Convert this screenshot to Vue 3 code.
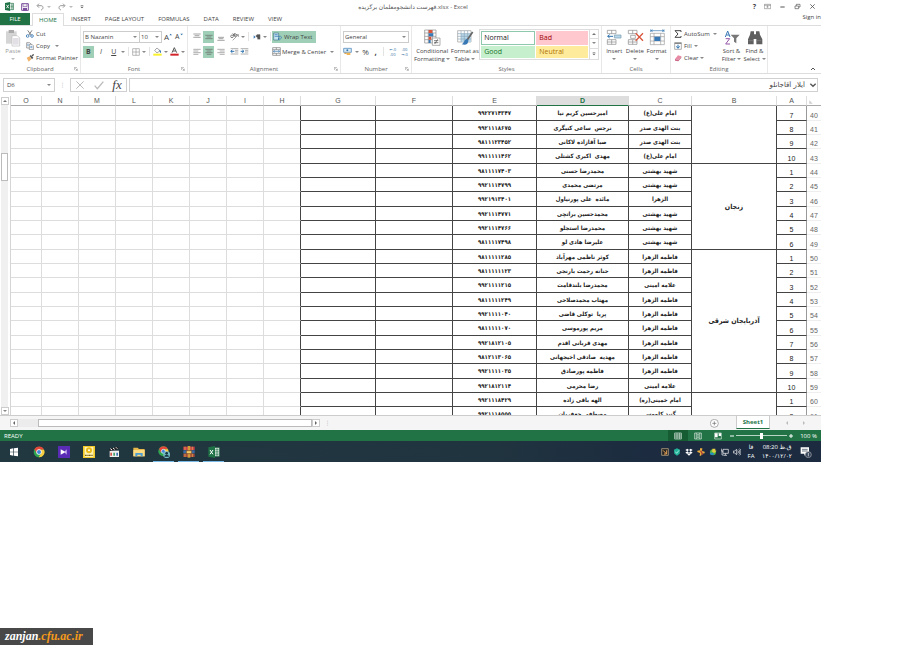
<script setup>
import { ref } from 'vue'

const tabs = ['INSERT', 'PAGE LAYOUT', 'FORMULAS', 'DATA', 'REVIEW', 'VIEW']
const columns = ['O', 'N', 'M', 'L', 'K', 'J', 'I', 'H', 'G', 'F', 'E', 'D', 'C', 'B', 'A']
const emptyColumns = ['O', 'N', 'M', 'L', 'K', 'J', 'I', 'H']

const records = [
  ['۹۹۲۲۷۱۴۳۴۷', 'امیرحسین کریم نیا', 'امام علی(ع)', 7],
  ['۹۹۲۱۱۱۸۶۷۵', 'نرجس  ساعی کنیگری', 'بنت الهدی صدر', 8],
  ['۹۸۱۱۱۲۳۴۵۲', 'صبا آقازاده لاکانی', 'بنت الهدی صدر', 9],
  ['۹۹۱۱۱۱۱۴۶۲', 'مهدی  اکبری کشتلی', 'امام علی(ع)', 10],
  ['۹۸۱۱۱۱۷۴۰۳', 'محمدرضا حسنی', 'شهید بهشتی', 1],
  ['۹۹۲۱۱۱۴۷۹۹', 'مرتضی محمدی', 'شهید بهشتی', 2],
  ['۹۹۲۱۹۱۳۴۰۱', 'مائده  علی پورنیاول', 'الزهرا', 3],
  ['۹۹۲۱۱۱۴۷۷۱', 'محمدحسین براتچی', 'شهید بهشتی', 4],
  ['۹۹۲۱۱۱۴۷۶۶', 'محمدرضا استجلو', 'شهید بهشتی', 5],
  ['۹۸۱۱۱۱۷۴۹۸', 'علیرضا هادی لو', 'شهید بهشتی', 6],
  ['۹۸۱۱۱۱۱۲۸۵', 'کوثر ناظمی مهرآباد', 'فاطمه الزهرا', 1],
  ['۹۸۱۱۱۱۱۱۲۳', 'حنانه رحمت بارنجی', 'فاطمه الزهرا', 2],
  ['۹۹۲۱۱۱۱۲۱۵', 'محمدرضا بلندقامت', 'علامه امینی', 3],
  ['۹۸۱۱۱۱۱۲۴۹', 'مهتاب محمدصلاحی', 'فاطمه الزهرا', 4],
  ['۹۹۲۱۱۱۱۰۴۰', 'پریا  توکلی قاضی', 'فاطمه الزهرا', 5],
  ['۹۸۱۱۱۱۱۰۷۰', 'مریم پورموسی', 'فاطمه الزهرا', 6],
  ['۹۹۲۱۸۱۲۱۰۵', 'مهدی قربانی اقدم', 'فاطمه الزهرا', 7],
  ['۹۸۱۲۱۱۳۰۶۵', 'مهدیه  صادقی اخیجهانی', 'فاطمه الزهرا', 8],
  ['۹۹۲۱۱۱۱۰۳۵', 'فاطمه پورصادق', 'فاطمه الزهرا', 9],
  ['۹۹۲۱۸۱۲۱۱۴', 'رضا محرمی', 'علامه امینی', 10],
  ['۹۹۲۱۱۱۸۴۲۹', 'الهه باقی زاده', 'امام خمینی(ره)', 1],
  ['۹۹۲۱۱۱۸۵۵۵', 'مصطفی جعفریان', 'گنبد کاووس', 2],
]
const provinces = {
  0: { name: '', span: 4 },
  4: { name: 'زنجان', span: 6 },
  10: { name: 'آذربایجان شرقی', span: 10 },
  20: { name: '', span: 2 },
}
const rows = records.map(([id, name, campus, index], i) => ({
  id, name, campus, index, number: 40 + i, province: provinces[i],
}))

const cellName = ref('D6')
const formula = ref('آیلار آقاجانلو')
const zoomLevel = ref(50)
</script>

<template>
  <div class="page">
    <main class="excel">
      <header class="titlebar">
        <div class="quick">
          <svg class="app-icon" viewBox="0 0 26 26"><path d="M0 3 15 0v26L0 23z" fill="#1e7145" /><path d="M15 4h10v18H15" fill="#fff" stroke="#1e7145" stroke-width="2" /><path d="M16 9h8M16 13h8M16 17h8M20 5v16" stroke="#1e7145" stroke-width="1.5" /><path d="m4 8 7 10M11 8 4 18" stroke="#fff" stroke-width="2.5" /></svg>
          <button aria-label="Save"><svg class="i8" viewBox="0 0 24 24"><path d="M2 2h20v20H2z" fill="#fff" stroke="#7b4f9d" stroke-width="3" /><path d="M6 2h12v9H6z" fill="#eee" stroke="#7b4f9d" stroke-width="2" /><path d="M6 15h12v8H6z" fill="#7b4f9d" /></svg></button>
          <button aria-label="Undo"><svg class="i8" viewBox="0 0 24 24"><path d="M9 2 3 8l6 6M4 8h11c8 0 8 11 0 13" fill="none" stroke="#999" stroke-width="3" /></svg><i class="caret pale"></i></button>
          <button aria-label="Redo"><svg class="i8" viewBox="0 0 24 24"><path d="m15 2 6 6-6 6M20 8H9C1 8 1 19 9 21" fill="none" stroke="#999" stroke-width="3" /></svg><i class="caret pale"></i></button>
          <button aria-label="Customize toolbar"><svg class="i4" viewBox="0 0 12 12"><path d="M2 1h8" stroke="#555" stroke-width="2" /><path d="M1 5h10L6 10z" fill="#555" /></svg></button>
        </div>
        <h1>فهرست دانشجومعلمان برگزیده.xlsx - Excel</h1>
        <div class="window">
          <button aria-label="Help" class="help">?</button>
          <button aria-label="Ribbon options"><svg class="i7" viewBox="0 0 21 21"><path d="M1 4h19v13H1zM1 7h19M10.500 15V9M7 12l3.500-3 3.500 3" fill="none" stroke="#666" stroke-width="1.500" /></svg></button>
          <button aria-label="Minimize"><svg class="i7" viewBox="0 0 21 21"><path d="M4 12h13" stroke="#555" stroke-width="3" /></svg></button>
          <button aria-label="Restore"><svg class="i7" viewBox="0 0 21 21"><path d="M3 9h11v8H3zM7 9V4h11v8h-4" fill="none" stroke="#555" stroke-width="2" /></svg></button>
          <button aria-label="Close"><svg class="i7" viewBox="0 0 21 21"><path d="m4 4 13 13M17 4 4 17" stroke="#555" stroke-width="2.500" /></svg></button>
        </div>
      </header>

      <nav class="tabs">
        <button class="file">FILE</button>
        <button class="home">HOME</button>
        <button v-for="tab in tabs" :key="tab">{{ tab }}</button>
        <a href="#signin">Sign in</a>
      </nav>

      <section class="ribbon">
        <div class="group clipboard">
          <div class="tools">
            <button class="big paste">
              <svg class="i18" viewBox="0 0 48 54"><path d="M3 7h32v37H3z" fill="#d5d5d5" /><path d="M11 3h16v9H11z" fill="#aaa" /><path d="M21 20h16l7 7v24H21z" fill="#fff" stroke="#bbb" stroke-width="2" /><path d="M24 27h17v20H24z" fill="#e2dfe5" /></svg>
              <span>Paste</span><i class="caret pale"></i>
            </button>
            <div class="stack">
              <button><svg class="i8" viewBox="0 0 24 24"><path d="m5 1 11 15M18 1 8 16" stroke="#666" stroke-width="2.500" /><circle cx="5" cy="18" r="4" fill="none" stroke="#3878b4" stroke-width="2.500" /><circle cx="18" cy="18" r="4" fill="none" stroke="#3878b4" stroke-width="2.500" /></svg>Cut</button>
              <button><svg class="i8" viewBox="0 0 24 24"><path d="M2 2h9l4 4v12H2z" fill="#fff" stroke="#777" stroke-width="2" /><path d="M10 7h8l4 4v12H10z" fill="#fff" stroke="#777" stroke-width="2" /><path d="M13 13h6M13 17h6M4 7h4M4 11h4" stroke="#3878b4" stroke-width="2" /></svg>Copy <i class="caret"></i></button>
              <button><svg class="i8" viewBox="0 0 24 24"><path d="m2 11 9-4 5 9-8 7z" fill="#f0b267" /><path d="m11 6 3-3 8 8-4 5z" fill="#555" /><path d="m18 6 5-5" stroke="#555" stroke-width="4" /></svg>Format Painter</button>
            </div>
          </div>
          <footer>Clipboard<svg class="launch" viewBox="0 0 12 12"><path d="M1 9V1h8M4 4l6 6M10 5v5H5" fill="none" stroke="#777" stroke-width="1.500" /></svg></footer>
        </div>

        <div class="group font">
          <div class="tools rows">
            <div class="line">
              <label class="combo family"><select aria-label="Font"><option>B Nazanin</option></select><i class="caret"></i></label>
              <label class="combo size"><select aria-label="Font size"><option>10</option></select><i class="caret"></i></label>
              <button class="letter" aria-label="Grow font">A<svg class="i4" viewBox="0 0 12 12"><path d="m1 7 4-5 4 5" fill="#2b70ad" /></svg></button>
              <button class="letter small" aria-label="Shrink font">A<svg class="i4" viewBox="0 0 12 12"><path d="m1 2 4 5 4-5" fill="#2b70ad" /></svg></button>
            </div>
            <div class="line">
              <button class="cell on"><b>B</b></button>
              <button class="cell"><em>I</em></button>
              <button class="cell"><u>U</u></button><i class="caret"></i>
              <hr>
              <button aria-label="Borders"><svg class="i8" viewBox="0 0 24 24"><path d="M2 2h20v20H2zM12 2v20M2 12h20" fill="none" stroke="#999" stroke-width="2" /></svg></button><i class="caret"></i>
              <hr>
              <button aria-label="Fill color"><svg class="i9" viewBox="0 0 27 27"><path d="m12 3 9 8-9 7-7-8z" fill="#fff" stroke="#777" stroke-width="2" /><path d="M20 8c5 2 5 8 3 10-3-2-4-5-3-10" fill="#3878b4" /><path d="M1 20h25v6H1z" fill="#fbf12c" /></svg></button><i class="caret"></i>
              <button aria-label="Font color"><svg class="i9" viewBox="0 0 27 27"><path d="m6 17 7-15 7 15M9 12h8" fill="none" stroke="#555" stroke-width="3" /><path d="M1 20h25v6H1z" fill="#d2232a" /></svg></button><i class="caret"></i>
            </div>
          </div>
          <footer>Font<svg class="launch" viewBox="0 0 12 12"><path d="M1 9V1h8M4 4l6 6M10 5v5H5" fill="none" stroke="#777" stroke-width="1.500" /></svg></footer>
        </div>

        <div class="group alignment">
          <div class="tools rows">
            <div class="line">
              <button class="cell" aria-label="Top align"><svg class="i8" viewBox="0 0 24 24"><path d="M1 3h22M5 8h14M1 13h22" stroke="#777" stroke-width="2" /></svg></button>
              <button class="cell on" aria-label="Middle align"><svg class="i8" viewBox="0 0 24 24"><path d="M1 7h22M5 12h14M1 17h22" stroke="#666" stroke-width="2" /></svg></button>
              <button class="cell" aria-label="Bottom align"><svg class="i8" viewBox="0 0 24 24"><path d="M3 13h18M5 17h14M1 22h22" stroke="#777" stroke-width="2" /></svg></button>
              <button class="orient" aria-label="Orientation"><svg class="i9" viewBox="0 0 27 27"><path d="M8 25 25 8M18 8h7v7" fill="none" stroke="#777" stroke-width="2" /><circle cx="6" cy="13" r="4" fill="none" stroke="#555" stroke-width="2" /><path d="m8 4 8 9M9 10l6-5" stroke="#555" stroke-width="2" /><circle cx="15" cy="9" r="4" fill="none" stroke="#555" stroke-width="2" /></svg><i class="caret"></i></button>
              <hr>
              <button class="orient" aria-label="Text direction"><svg class="i8" viewBox="0 0 24 24"><path d="m2 7 6 5-6 5z" fill="#3878b4" /><path d="M14 19V5h7v14M18 5v14M14 5c-6 0-6 8 0 8" fill="#555" stroke="#555" stroke-width="1.500" /></svg><i class="caret"></i></button>
              <hr>
              <button class="wrap on"><svg class="i9" viewBox="0 0 27 27"><path d="M2 3h15v21H2z" fill="#c6e5f3" stroke="#478" stroke-width="2" /><path d="M5 8h9M5 13h17c5 0 5 8-2 8h-4M19 17l-4 4 4 4" fill="none" stroke="#2b70ad" stroke-width="2" /></svg>Wrap Text</button>
            </div>
            <div class="line">
              <button class="cell" aria-label="Align left"><svg class="i8" viewBox="0 0 24 24"><path d="M1 4h22M1 9h15M1 14h22M1 19h15" stroke="#888" stroke-width="2" /></svg></button>
              <button class="cell on" aria-label="Center"><svg class="i8" viewBox="0 0 24 24"><path d="M1 4h22M5 9h14M1 14h22M5 19h14" stroke="#666" stroke-width="2" /></svg></button>
              <button class="cell" aria-label="Align right"><svg class="i8" viewBox="0 0 24 24"><path d="M1 4h22M8 9h15M1 14h22M8 19h15" stroke="#888" stroke-width="2" /></svg></button>
              <button class="indent" aria-label="Decrease indent"><svg class="i9" viewBox="0 0 27 27"><path d="M2 5h23M15 10h10M15 15h10M2 21h23" stroke="#888" stroke-width="2" /><path d="M13 13H3m4-4-5 4 5 4" fill="none" stroke="#2b70ad" stroke-width="3" /></svg></button>
              <button aria-label="Increase indent"><svg class="i9" viewBox="0 0 27 27"><path d="M2 5h23M15 10h10M15 15h10M2 21h23" stroke="#888" stroke-width="2" /><path d="M2 13h9M7 9l5 4-5 4" fill="none" stroke="#2b70ad" stroke-width="3" /></svg></button>
              <button class="merge"><svg class="i9" viewBox="0 0 27 27"><path d="M2 2h23v23H2zM2 8h23M2 19h23M13 2v6M13 19v6" fill="none" stroke="#777" stroke-width="2" /><path d="M5 13h17M8 10l-4 3 4 3M19 10l4 3-4 3" fill="none" stroke="#2b70ad" stroke-width="2" /></svg>Merge &amp; Center <i class="caret"></i></button>
            </div>
          </div>
          <footer>Alignment<svg class="launch" viewBox="0 0 12 12"><path d="M1 9V1h8M4 4l6 6M10 5v5H5" fill="none" stroke="#777" stroke-width="1.500" /></svg></footer>
        </div>

        <div class="group number">
          <div class="tools rows">
            <div class="line"><label class="combo format"><select aria-label="Number format"><option>General</option></select><i class="caret"></i></label></div>
            <div class="line spread">
              <button aria-label="Accounting format"><svg class="i9" viewBox="0 0 27 27"><path d="M2 4h23v12H2z" fill="#d9ebf5" stroke="#3878b4" stroke-width="2" /><circle cx="13" cy="10" r="3" fill="#3878b4" /><path d="M11 17h11v7H11z" fill="#f0b253" /><path d="M4 19h7" stroke="#d69732" stroke-width="3" /></svg></button><i class="caret"></i>
              <button class="percent">%</button>
              <button class="percent"><b>,</b></button>
              <hr>
              <button class="decimals"><span>←.0</span><span>.00</span></button>
              <button class="decimals"><span>.00</span><span>→.0</span></button>
            </div>
          </div>
          <footer>Number<svg class="launch" viewBox="0 0 12 12"><path d="M1 9V1h8M4 4l6 6M10 5v5H5" fill="none" stroke="#777" stroke-width="1.500" /></svg></footer>
        </div>

        <div class="group styles">
          <div class="tools">
            <button class="big conditional">
              <svg class="i18" viewBox="0 0 54 54"><path d="M5 3h34v39H5z" fill="#fff" stroke="#888" stroke-width="2" /><path d="M5 12h34M5 22h34M5 32h34M16 3v39M28 3v39" stroke="#888" stroke-width="2" /><path d="M17 3h11v9H17zM17 23h8v9h-8z" fill="#d9543c" /><path d="M17 13h14v9H17zM17 33h6v9h-6z" fill="#3878b4" /><path d="M28 27h23v22H28z" fill="#fff" stroke="#888" stroke-width="2" /><path d="M33 35h13M33 41h13M44 31 35 45" stroke="#444" stroke-width="2" /></svg>
              <span>Conditional</span><span>Formatting <i class="caret"></i></span>
            </button>
            <button class="big as-table">
              <svg class="i18" viewBox="0 0 54 54"><path d="M5 5h40v34H5z" fill="#fff" stroke="#999" stroke-width="2" /><path d="M15 14h30v25H15z" fill="#b9d7ea" /><path d="M5 14h40M5 22h40M5 30h40M15 5v34M25 5v34M35 5v34" stroke="#8aa6b8" stroke-width="2" /><path d="m50 9-17 25" stroke="#666" stroke-width="5" /><path d="M33 30c-8 0-8 12-16 16 12 4 20 0 20-12z" fill="#3878b4" /></svg>
              <span>Format as</span><span>Table <i class="caret"></i></span>
            </button>
            <div class="gallery">
              <button class="normal">Normal</button><button class="bad">Bad</button>
              <button class="good">Good</button><button class="neutral">Neutral</button>
            </div>
            <div class="scroller">
              <button aria-label="Previous styles"><i class="caret up"></i></button>
              <button aria-label="Next styles"><i class="caret"></i></button>
              <button aria-label="More styles"><svg class="i4" viewBox="0 0 12 12"><path d="M2 2h8" stroke="#666" stroke-width="2" /><path d="M1 5h10L6 10z" fill="#666" /></svg></button>
            </div>
          </div>
          <footer>Styles</footer>
        </div>

        <div class="group cells">
          <div class="tools">
            <button class="big">
              <svg class="i18" viewBox="0 0 54 54"><path d="M7 4h26v10H7zM7 32h26v14H7zM20 4v10M20 32v14M7 39h26" fill="#fff" stroke="#888" stroke-width="2" /><path d="M28 18h20v9H28z" fill="#b9d7ea" stroke="#7497ad" stroke-width="2" /><path d="M24 22H8m6-5-6 5 6 5" fill="none" stroke="#2b70ad" stroke-width="3" /></svg>
              <span>Insert</span><i class="caret"></i>
            </button>
            <button class="big">
              <svg class="i18" viewBox="0 0 54 54"><path d="M7 4h26v10H7zM7 32h26v14H7zM20 4v10M20 32v14M7 39h26M14 19h14v9H14z" fill="#fff" stroke="#888" stroke-width="2" /><path d="m29 13 22 22M51 13 29 35" stroke="#d9543c" stroke-width="4" /></svg>
              <span>Delete</span><i class="caret"></i>
            </button>
            <button class="big">
              <svg class="i18" viewBox="0 0 54 54"><path d="M7 13h42v34H7zM7 23h42M7 36h42M18 13v34M38 13v34" fill="#fff" stroke="#999" stroke-width="2" /><path d="M19 23h18v13H19z" fill="#3878b4" /><path d="M8 5h40M8 1v8M48 1v8M14 2 9 5l5 3M42 2l5 3-5 3" fill="none" stroke="#3878b4" stroke-width="2" /></svg>
              <span>Format</span><i class="caret"></i>
            </button>
          </div>
          <footer>Cells</footer>
        </div>

        <div class="group editing">
          <div class="tools">
            <div class="stack">
              <button><svg class="i8" viewBox="0 0 24 24"><path d="M21 6V2H3l9 10-9 10h18v-4" fill="none" stroke="#444" stroke-width="3" /></svg>AutoSum <i class="caret"></i></button>
              <button><svg class="i8" viewBox="0 0 24 24"><path d="M2 2h20v20H2z" fill="#fff" stroke="#888" stroke-width="2" /><path d="M2 2h20v4H2z" fill="#888" /><path d="M12 8v10m-5-5 5 6 5-6" fill="none" stroke="#2b70ad" stroke-width="3" /></svg>Fill<i class="caret"></i></button>
              <button><svg class="i8" viewBox="0 0 24 24"><path d="m3 15 9-11 10 3-9 11z" fill="#e98aa5" /><path d="m3 15 10 3v4L3 20zM13 18l9-11v4l-9 11z" fill="#c96786" /></svg>Clear<i class="caret"></i></button>
            </div>
            <button class="big">
              <svg class="i18" viewBox="0 0 54 54"><path d="m7 24 7-18 7 18M10 18h9" fill="none" stroke="#3878b4" stroke-width="3" /><path d="M8 29h12L8 45h13" fill="none" stroke="#9254a3" stroke-width="3" /><path d="M23 17h27L40 28v15l-7-5V28z" fill="#777" /></svg>
              <span>Sort &amp;</span><span>Filter <i class="caret"></i></span>
            </button>
            <button class="big">
              <svg class="i18" viewBox="0 0 54 54"><path d="M14 7h10v9h6V7h10l2 10 7 14v15H31V30h-8v16H6V31l6-14z" fill="#606060" /><path d="M7 35h14M32 35h14" stroke="#888" stroke-width="2" /></svg>
              <span>Find &amp;</span><span>Select <i class="caret"></i></span>
            </button>
          </div>
          <footer>Editing</footer>
        </div>
        <button class="collapse" aria-label="Collapse ribbon"><svg class="i6" viewBox="0 0 18 18"><path d="m3 12 6-6 6 6" fill="none" stroke="#555" stroke-width="3" /></svg></button>
      </section>

      <section class="formula-bar">
        <label class="name-box"><input v-model="cellName" aria-label="Name box"><i class="caret"></i></label>
        <span class="dots">⋮</span>
        <div class="entry">
          <button aria-label="Cancel"><svg class="i10" viewBox="0 0 30 30"><path d="m4 4 22 22M26 4 4 26" stroke="#bbb" stroke-width="3" /></svg></button>
          <button aria-label="Enter"><svg class="i10" viewBox="0 0 30 30"><path d="m2 17 8 9L28 5" fill="none" stroke="#bbb" stroke-width="4" /></svg></button>
          <button class="fx" aria-label="Insert function">fx</button>
        </div>
        <label class="formula"><input v-model="formula" dir="rtl" aria-label="Formula"><svg class="i8" viewBox="0 0 24 24"><path d="m4 8 8 8 8-8" fill="none" stroke="#555" stroke-width="4" /></svg></label>
      </section>

      <section class="workspace">
        <div class="vscroll">
          <button aria-label="Scroll up"><i class="caret up"></i></button>
          <div class="before"></div><div class="thumb"></div><div class="after"></div>
          <button aria-label="Scroll down"><i class="caret"></i></button>
        </div>
        <div class="sheet">
          <table>
            <colgroup><col v-for="c in columns" :key="c" :class="'col-' + c"><col class="col-num"></colgroup>
            <thead>
              <tr>
                <th v-for="c in columns" :key="c" :class="{ selected: c === 'D' }">{{ c }}</th>
                <th class="corner"><svg class="i4" viewBox="0 0 12 12"><path d="M1 1v10h10z" fill="#ccc" /></svg></th>
              </tr>
            </thead>
            <tbody>
              <tr v-for="row in rows" :key="row.number">
                <td v-for="c in emptyColumns" :key="c" :class="['blank', c]"></td>
                <td></td>
                <td></td>
                <td class="fa">{{ row.id }}</td>
                <td class="fa" dir="rtl">{{ row.name }}</td>
                <td class="fa" dir="rtl">{{ row.campus }}</td>
                <td v-if="row.province" class="province" :rowspan="row.province.span">{{ row.province.name }}</td>
                <td class="index">{{ row.index }}</td>
                <th class="rownum">{{ row.number }}</th>
              </tr>
            </tbody>
          </table>
        </div>
      </section>

      <section class="sheetbar">
        <div class="hscroll">
          <button aria-label="Scroll left"><i class="caret left"></i></button>
          <div class="gap"></div><div class="thumb"></div>
          <button aria-label="Scroll right"><i class="caret right"></i></button>
        </div>
        <span class="dots">⋮</span>
        <button class="add" aria-label="New sheet"><svg class="i9" viewBox="0 0 27 27"><circle cx="13" cy="13" r="12" fill="#fff" stroke="#888" stroke-width="2" /><path d="M13 7v12M7 13h12" stroke="#666" stroke-width="2" /></svg></button>
        <button class="sheet-tab">Sheet1</button>
        <div class="pager"><button aria-label="Previous sheet"><i class="caret left pale"></i></button><button aria-label="Next sheet"><i class="caret right pale"></i></button></div>
      </section>

      <footer class="status">
        <span class="ready">READY</span>
        <button class="view active" aria-label="Normal view"><svg class="i8" viewBox="0 0 24 24"><path d="M2 3h20v18H2zM2 9h20M2 15h20M9 3v18M16 3v18" fill="none" stroke="#dcebe2" stroke-width="2" /></svg></button>
        <button class="view" aria-label="Page layout view"><svg class="i8" viewBox="0 0 24 24"><path d="M2 3h20v18H2zM7 3v18M17 3v18M9 8h6M9 12h6M9 16h6" fill="none" stroke="#dcebe2" stroke-width="2" /></svg></button>
        <button class="view" aria-label="Page break view"><svg class="i8" viewBox="0 0 24 24"><path d="M2 3h20v18H2z" fill="none" stroke="#dcebe2" stroke-width="2" /><path d="M3 4h8v12H3zM14 4h7v8h-7z" fill="#fff" /></svg></button>
        <button class="step" aria-label="Zoom out"><svg class="i6" viewBox="0 0 18 18"><path d="M3 9h12" stroke="#fff" stroke-width="3" /></svg></button>
        <input v-model="zoomLevel" type="range" aria-label="Zoom">
        <button class="step" aria-label="Zoom in"><svg class="i6" viewBox="0 0 18 18"><path d="M3 9h12M9 3v12" stroke="#fff" stroke-width="3" /></svg></button>
        <span class="zoom">100 %</span>
      </footer>

      <nav class="taskbar">
        <button aria-label="Start"><svg class="i12" viewBox="0 0 36 36"><path d="m6 9 10-2v10H6zM18 7l12-2v12H18zM6 19h10v10L6 27zM18 19h12v12l-12-2z" fill="#fff" /></svg></button>
        <button aria-label="Chrome"><svg class="i12" viewBox="0 0 36 36"><circle cx="18" cy="18" r="16" fill="#2fa552" /><path d="M4 10A16 16 0 0 1 33 11H18l-7 10z" fill="#e4473a" /><path d="M18 11h15A16 16 0 0 1 17 34l8-13z" fill="#f8cd3f" /><circle cx="18" cy="18" r="8" fill="#fff" /><circle cx="18" cy="18" r="6" fill="#4285d8" /></svg></button>
        <button aria-label="Media player"><svg class="i12" viewBox="0 0 36 36"><path d="M0 0h36v36H0z" fill="#5a2bb5" /><path d="m8 10 15 8-15 8z" fill="#fff" /><path d="M26 10v16l-7-8z" fill="#cdb9ee" /></svg></button>
        <button aria-label="Player"><svg class="i12" viewBox="0 0 36 36"><path d="M0 0h36v36H0z" fill="#f2c928" /><path d="M5 3h26v30H5z" fill="#fff3b4" /><circle cx="18" cy="13" r="9" fill="#e9b915" /><circle cx="18" cy="13" r="3" fill="#fff" /><path d="M6 28h24" stroke="#765e19" stroke-width="4" stroke-dasharray="3 1" /></svg></button>
        <button aria-label="Movie maker"><svg class="i12" viewBox="0 0 36 36"><path d="M5 14h28v19H5z" fill="#eee" /><path d="m3 9 27-7 2 7-27 6z" fill="#222" /><path d="m7 8 5 4M15 6l5 4M24 4l4 4" stroke="#fff" stroke-width="3" /><path d="M7 20h5v9H7z" fill="#d65548" /><path d="M16 20h5v9h-5z" fill="#469e6a" /><path d="M25 20h5v9h-5z" fill="#3e76b5" /></svg></button>
        <button aria-label="File explorer"><svg class="i12" viewBox="0 0 36 36"><path d="M1 5h13l4 4h17v22H1z" fill="#e9b84d" /><path d="M1 12h34v19H1z" fill="#fbdc83" /><path d="M7 31V21h22v10h-6v-5H13v5z" fill="#4b9dd2" /></svg></button>
        <button class="running" aria-label="Chrome profile"><svg class="i12" viewBox="0 0 36 36"><circle cx="16" cy="16" r="15" fill="#2fa552" /><path d="M3 9A15 15 0 0 1 30 10H16L9 20z" fill="#e4473a" /><path d="M16 10h14A15 15 0 0 1 16 31l6-12z" fill="#f8cd3f" /><circle cx="16" cy="16" r="6" fill="#4285d8" stroke="#fff" stroke-width="2" /><circle cx="26" cy="26" r="10" fill="#72bac3" /><circle cx="26" cy="22" r="4" fill="#173744" /><path d="M19 32c0-8 14-8 14 0z" fill="#173744" /></svg></button>
        <button class="running" aria-label="Archive manager"><svg class="i12" viewBox="0 0 36 36"><path d="M1 2h34v10H1z" fill="#c8404a" /><path d="M1 13h34v9H1z" fill="#3b69a8" /><path d="M1 23h34v10H1z" fill="#a34a3c" /><path d="M14 0h8v35h-8z" fill="#d59b38" /><path d="M10 14h16v9H10z" fill="#f0cd67" stroke="#743d21" stroke-width="2" /><path d="M6 2v10M28 2v10M6 23v10M28 23v10" stroke="#e9b84d" stroke-width="2" /></svg></button>
        <button class="running" aria-label="Excel"><svg class="i12" viewBox="0 0 36 36"><path d="M20 5h14v26H20z" fill="#fff" stroke="#1e7145" stroke-width="2" /><path d="M22 11h10M22 16h10M22 21h10M22 26h10M27 6v24" stroke="#1e7145" stroke-width="2" /><path d="m1 4 20-4v36L1 32z" fill="#1e7145" /><path d="m6 12 9 13M15 12 6 25" stroke="#fff" stroke-width="3" /></svg></button>
        <div class="tray">
          <svg class="i8" viewBox="0 0 24 24"><path d="M2 2h20v20H2z" fill="#242424" stroke="#d5b98e" stroke-width="2" /><path d="m6 7 11 11M17 7v11H9" fill="none" stroke="#e7a258" stroke-width="3" /></svg>
          <svg class="i8" viewBox="0 0 24 24"><path d="m12 1 9 4-1 12-8 6-8-6L3 5z" fill="#23b39a" /><path d="m7 11 4 5 7-9" fill="none" stroke="#d5fff6" stroke-width="2" /></svg>
          <svg class="i8" viewBox="0 0 24 24"><path d="m7 2 5 4-5 4-6-4zM17 2l6 4-6 4-5-4zM7 10l5 4-5 4-6-4zM17 10l6 4-6 4-5-4zM12 16l5 3-5 4-5-4z" fill="#fff" /></svg>
          <svg class="i8" viewBox="0 0 24 24"><path d="M9 1h7l-1 8 8 2v5l-8 1-3 6H8l1-8-8-3V8l8-1z" fill="#e9ad3d" /><path d="m11 8 6 12" stroke="#a93d38" stroke-width="4" /></svg>
          <svg class="i8" viewBox="0 0 24 24"><circle cx="12" cy="13" r="9" fill="#50b83f" /><path d="M10 2h9v6h4l-8 8-8-8h3z" fill="#e8c943" /><path d="M2 14h12v7H5z" fill="#2a8dc2" /></svg>
          <svg class="i8" viewBox="0 0 24 24"><path d="M6 4h16v12H6zM13 16v5M8 22h10M1 2v7h5M3 9v12h5" fill="none" stroke="#fff" stroke-width="2" /></svg>
          <svg class="i8" viewBox="0 0 24 24"><path d="M1 9h4l6-5v16l-6-5H1zM14 8c3 2 3 6 0 8M17 5c5 4 5 10 0 14M20 2c6 5 6 15 0 20" fill="none" stroke="#fff" stroke-width="2" /></svg>
        </div>
        <div class="lang"><span>فا</span><span>FA</span></div>
        <div class="clock"><span>08:20 ق.ظ</span><span>۱۴۰۰/۱۲/۰۲</span></div>
        <button class="notice" aria-label="Notifications"><svg class="i12" viewBox="0 0 36 36"><path d="M2 4h25v19h-8l-6 6v-6H2z" fill="#fff" /><path d="M6 10h17M6 15h17" stroke="#26354a" stroke-width="2" /><circle cx="25" cy="26" r="9" fill="#35445a" stroke="#aaa" stroke-width="2" /><path d="M25 21v10" stroke="#fff" stroke-width="2" /></svg></button>
      </nav>
    </main>
    <a class="watermark" href="#site">zanjan<span>.cfu.ac.ir</span></a>
  </div>
</template>

<style>
body { margin: 0; background: #fff; }
</style>

<style scoped>
.page { display: flex; flex-direction: column; align-items: flex-start; justify-content: space-between; min-height: 100vh; box-sizing: border-box; padding: 0 79px 9px 0; font-family: "Open Sans", "DejaVu Sans", sans-serif; font-size: 6px; line-height: 8px; color: #444; }
.page * { box-sizing: border-box; }
button, input, select { font: inherit; color: inherit; background: none; border: 0; padding: 0; margin: 0; outline: 0; }
button { display: flex; align-items: center; white-space: nowrap; }
select { appearance: none; flex: 1; min-width: 0; }
a { color: inherit; text-decoration: none; }
svg { flex: none; display: block; }
.i4 { width: 4px; height: 4px; }
.i6 { width: 6px; height: 6px; }
.i7 { width: 7px; height: 7px; }
.i8 { width: 8px; height: 8px; }
.i9 { width: 9px; height: 9px; }
.i10 { width: 10px; height: 10px; }
.i12 { width: 12px; height: 12px; }
.i18 { width: 18px; height: 18px; }
.caret { display: inline-block; flex: none; width: 0; height: 0; border: 2px solid transparent; border-top-color: #888; border-bottom: 0; vertical-align: middle; }
.caret.pale { border-top-color: #bbb; }
.caret.up { border-top: 0; border-bottom: 2px solid #777; }
.caret.left { border: 2px solid transparent; border-right-color: #666; border-left: 0; }
.caret.right { border: 2px solid transparent; border-left-color: #666; border-right: 0; }
.caret.left.pale { border-right-color: #bbb; }
.caret.right.pale { border-left-color: #bbb; }
.excel { width: 100%; }

.titlebar { display: grid; grid-template-columns: 1fr auto 1fr; align-items: center; height: 13px; padding-left: 5px; }
.quick { display: flex; align-items: center; gap: 7px; }
.quick button { gap: 3px; }
.app-icon { width: 9px; height: 9px; }
h1 { margin: 0; font-size: 6px; font-weight: 400; line-height: 12px; color: #555; }
.window { display: flex; justify-content: flex-end; gap: 8px; padding-right: 5px; }
.help { font-weight: 700; font-size: 7px; }

.tabs { display: flex; height: 12px; }
.tabs button { padding: 0 7px; }
.tabs .file { width: 30px; justify-content: center; background: #217346; color: #fff; margin-right: 2px; }
.tabs .home { width: 32px; height: 13px; padding: 0; justify-content: center; color: #217346; border: 1px solid #ddd; border-bottom: 0; background: #fff; z-index: 1; }
.tabs a { margin-left: auto; }

.ribbon { display: flex; height: 49px; border-top: 1px solid #ddd; border-bottom: 1px solid #ddd; }
.group { display: flex; flex-direction: column; justify-content: space-between; padding: 2px 0 0; border-right: 1px solid #e8e8e8; }
.group footer { display: flex; justify-content: center; position: relative; color: #666; }
.launch { position: absolute; right: 2px; bottom: 2px; width: 4px; height: 4px; }
.tools { display: flex; align-items: flex-start; padding: 0 2px; }
.rows { flex-direction: column; align-items: stretch; gap: 2px; padding-top: 2px; }
.line { display: flex; align-items: center; gap: 3px; height: 13px; }
.line hr { width: 1px; height: 9px; margin: 0 1px; border: 0; background: #e3e3e3; }
.stack { display: flex; flex-direction: column; }
.stack button { height: 12px; gap: 2px; }
.big { flex-direction: column; line-height: 8px; text-align: center; padding-top: 1px; }
.big > .caret { margin-top: 3px; }
.clipboard { width: 81px; }
.clipboard .tools { gap: 2px; }
.paste { width: 22px; color: #999; }
.clipboard .stack .caret { margin-left: 3px; }
.font { width: 107px; }
.combo { display: flex; align-items: center; height: 12px; padding: 0 2px 0 1px; border: 1px solid #ccc; background: #fff; }
.family { width: 57px; }
.size { width: 23px; margin-left: -3px; }
.letter { align-items: flex-start; font-size: 8px; }
.letter.small { font-size: 7px; }
.cell { width: 11px; height: 12px; justify-content: center; }
.font .line { gap: 2px; }
.font .cell { font-size: 7px; }
.on { background: #9fd0b7; }
.alignment { width: 153px; }
.alignment .line { gap: 1px; padding-left: 1px; }
.orient { gap: 2px; padding: 0 2px 0 3px; }
.alignment hr { margin: 0; }
.wrap { height: 12px; padding: 0 3px 0 1px; gap: 2px; }
.indent { margin-left: 3px; }
.merge { gap: 1px; margin-left: 22px; }
.merge .caret { margin-left: 3px; }
.number { width: 71px; }
.format { width: 68px; }
.percent { font-size: 8px; width: 8px; justify-content: center; }
.decimals { flex-direction: column; width: 10px; font-size: 4px; line-height: 5px; color: #346f9f; }
.styles { width: 190px; }
.conditional { width: 37px; }
.as-table { width: 30px; }
.gallery { display: grid; grid-template-columns: 54px 52px; gap: 1px; padding: 1px; height: 31px; border: 1px solid #ddd; margin-top: 1px; }
.gallery button { padding: 0 3px; font-size: 7px; }
.gallery .normal { border: 1px solid #8fc9ad; color: #222; padding: 0 2px; }
.bad { background: #ffc7ce; color: #9c0006; }
.good { background: #c6efce; color: #17742a; }
.neutral { background: #ffeb9c; color: #ae7300; }
.scroller { display: grid; width: 9px; height: 31px; margin-top: 1px; border: 1px solid #ddd; border-left: 0; }
.scroller button { justify-content: center; }
.scroller button + button { border-top: 1px solid #ddd; }
.cells { width: 69px; }
.cells .tools { justify-content: space-around; }
.editing { width: 97px; }
.editing .tools { padding: 0 0 0 3px; }
.editing .stack { width: 46px; }
.editing .stack button:first-child .caret { margin-left: 1px; }
.editing .big { width: 23px; }
.collapse { margin-left: auto; align-self: flex-end; padding: 1px 5px; }

.formula-bar { display: flex; align-items: center; height: 22px; padding: 0 3px; }
.name-box { display: flex; align-items: center; width: 52px; height: 14px; padding: 0 3px; border: 1px solid #d0d0d0; }
.name-box input { flex: 1; min-width: 0; }
.dots { width: 15px; text-align: center; color: #999; }
.entry { display: flex; align-items: center; justify-content: space-around; width: 57px; height: 14px; border: 1px solid #d0d0d0; }
.fx { font-family: "Liberation Serif", serif; font-size: 13px; font-style: italic; }
.formula { display: flex; align-items: center; flex: 1; height: 14px; margin-left: 2px; border: 1px solid #d0d0d0; }
.formula input { flex: 1; padding: 0 4px; font-size: 7px; font-family: "DejaVu Sans", sans-serif; }

.workspace { display: flex; height: 319px; overflow: hidden; }
.vscroll { display: flex; flex-direction: column; width: 11px; padding: 1px 2px 0 1px; border-right: 1px solid #d5d5d5; }
.vscroll button, .hscroll button { flex: none; width: 8px; height: 8px; justify-content: center; border: 1px solid #ccc; background: #fff; }
.before { flex: 48; background: #f0f0f0; }
.vscroll .thumb { flex: 26; border: 1px solid #bbb; background: #fff; }
.after { flex: 227; background: #f0f0f0; }
.sheet { flex: 1; overflow: hidden; }
table { width: 100%; table-layout: fixed; border-spacing: 0; border-collapse: separate; font-family: "Liberation Sans", "DejaVu Sans", sans-serif; }
.col-N, .col-M, .col-L, .col-K, .col-J, .col-I, .col-H { width: 37px; }
.col-G { width: 75px; }
.col-F { width: 77px; }
.col-E { width: 84px; }
.col-D { width: 92px; }
.col-C { width: 63px; }
.col-B { width: 85px; }
.col-A { width: 30px; }
.col-num { width: 14px; }
th, td { padding: 0; text-align: center; overflow: hidden; white-space: pre; }
thead th { height: 10px; font-size: 7px; line-height: 9px; font-weight: 400; color: #555; border-right: 1px solid #ddd; border-bottom: 1px solid #aaa; }
thead .selected { background: #dedede; color: #217346; font-weight: 700; border-bottom-color: #217346; }
thead .corner { border-right: 0; }
.corner svg { margin: 2px 0 0 2px; }
tbody tr { height: 14px; }
tbody tr:nth-child(3n + 1) { height: 15px; }
td { border-right: 1px solid #444; border-bottom: 1px solid #444; line-height: 8px; color: #222; }
td.blank { border-color: #ddd; }
td.H { border-right-color: #444; }
.fa { font-family: "DejaVu Sans Condensed", "DejaVu Sans", sans-serif; font-size: 6px; font-weight: 700; }
.province { font-family: "DejaVu Sans Condensed", "DejaVu Sans", sans-serif; font-size: 7px; line-height: 12px; font-weight: 700; }
.index { font-size: 7px; vertical-align: bottom; border-right-color: #999; }
.rownum { font-size: 7px; line-height: 8px; font-weight: 400; color: #666; vertical-align: bottom; border-bottom: 1px solid #eee; }

.sheetbar { display: flex; align-items: center; height: 15px; padding-left: 10px; background: #f5f5f5; border-top: 1px solid #ccc; }
.hscroll { display: flex; width: 310px; background: #ececec; }
.hscroll .gap { flex: 20; }
.hscroll .thumb { flex: 274; border: 1px solid #bbb; background: #fff; }
.add { margin-left: auto; margin-right: 17px; }
.sheet-tab { width: 34px; height: 13px; align-self: flex-start; justify-content: center; background: #fff; border: 1px solid #ccc; border-top: 0; border-bottom: 1px solid #217346; color: #217346; font-weight: 700; font-size: 6px; }
.pager { display: flex; justify-content: space-around; width: 51px; padding: 0 13px; gap: 9px; }

.status { display: flex; align-items: center; height: 11px; padding: 0 4px; background: #217346; color: #fff; }
.ready { flex: 1; }
.view { width: 20px; height: 11px; justify-content: center; }
.view.active { background: #165c33; }
.step { margin: 0 1px; }
.status input { appearance: none; width: 51px; height: 1px; background: #b9d5c5; }
.status input::-webkit-slider-thumb { appearance: none; width: 3px; height: 6px; background: #fff; }
.zoom { width: 22px; text-align: right; }

.taskbar { display: flex; align-items: center; height: 21px; padding-left: 1px; background: linear-gradient(90deg, #213840, #20343f 60%, #1c2b40 80%); color: #fff; }
.taskbar button { width: 25px; height: 21px; justify-content: center; background: linear-gradient(transparent, transparent) center bottom / 21px 1px no-repeat; }
.taskbar .running { background-image: linear-gradient(#79b9e8, #79b9e8); }
.tray { display: flex; gap: 4px; margin-left: auto; }
.lang, .clock { display: flex; flex-direction: column; align-items: center; line-height: 9px; }
.lang { width: 20px; }
.clock { width: 32px; }
.taskbar .notice { margin-right: 3px; }

.watermark { padding: 0 10px 0 5px; background: #484848; color: #fff; font-family: "Liberation Serif", serif; font-size: 12px; line-height: 17px; font-weight: 700; font-style: italic; }
.watermark span { color: #f59a1b; }
</style>
